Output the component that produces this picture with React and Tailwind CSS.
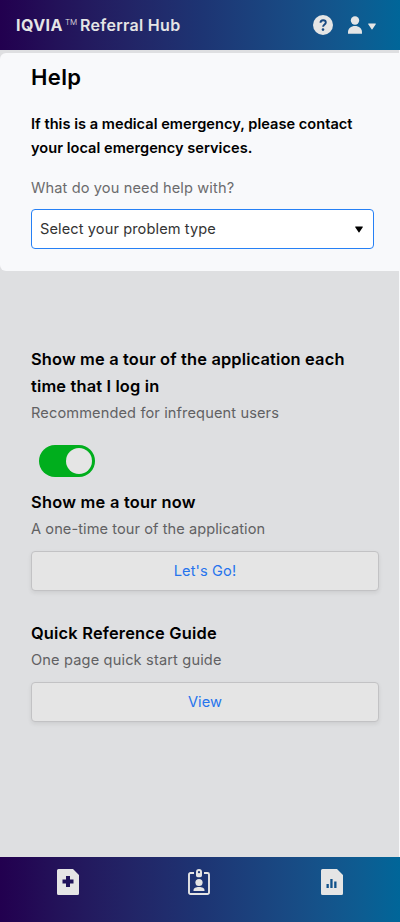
function Caret({ className }) {
  return (
    <svg className={className} viewBox="0 0 10 8" fill="currentColor" aria-hidden="true">
      <path d="M.6.4h8.8c.4 0 .5.4.3.7L5.5 7.4c-.3.4-.7.4-1 0L.3 1.1C.1.8.2.4.6.4Z" />
    </svg>
  );
}

function Header() {
  return (
    <header className="flex h-[50px] items-center bg-linear-to-r from-[#22004f] via-[#1d3473] to-[#006699] pl-4 pr-6 text-[#e5e5e5]">
      <h1 className="flex items-center text-[16px] leading-6">
        <span className="w-[49px] font-bold tracking-[0.45px]">IQVIA</span>
        <span className="mt-[-6px] w-[15px] text-[8px] font-light leading-4">TM</span>
        <span className="whitespace-nowrap font-semibold tracking-[0.3px]">Referral Hub</span>
      </h1>
      <div className="ml-auto flex items-center">
        <svg className="size-5" viewBox="0 0 20 20" aria-label="Help">
          <circle cx="10" cy="10" r="10" fill="#e5e5e5" />
          <path d="M7.5 7.8C7.5 6 8.500 5.200 10.100 5.200s2.700 1 2.700 2.300c0 2-2.700 2-2.700 4.300" fill="none" stroke="#174982" strokeWidth="1.9" />
          <circle cx="10" cy="14.600" r="1.300" fill="#174982" />
        </svg>
        <svg className="ml-[15px] h-[18px] w-[14px]" viewBox="0 0 14 18" fill="currentColor" aria-label="Account">
          <circle cx="7" cy="4.5" r="4.200" />
          <path d="M0 17.700v-1.500C0 12.500 3 10 7 10s7 2.500 7 6.200v1.500Z" />
        </svg>
        <Caret className="ml-[6px] mt-[3px] h-[7px] w-2" />
      </div>
    </header>
  );
}

function ActionButton({ children }) {
  return (
    <button className="block h-10 w-full rounded border border-[#c2c2c4] bg-[#e5e5e5] pt-0.5 text-[14.6px] text-[#2674ed] shadow-[0_2px_4px_rgba(0,0,0,0.08)]">
      {children}
    </button>
  );
}

function Footer() {
  return (
    <footer className="h-[65px] bg-linear-to-r from-[#22004f] via-[#1d3473] to-[#006699] text-[#e5e5e5]">
      <nav className="flex pl-[57px] pt-3">
        <svg className="h-[26px] w-[22px]" viewBox="0 0 22 26" aria-label="New referral">
          <path d="M1.500 0H16l6 6v18.500a1.500 1.500 0 0 1-1.500 1.500h-19A1.500 1.500 0 0 1 0 24.500v-23A1.500 1.500 0 0 1 1.500 0Z" fill="currentColor" />
          <path d="M9 7h4v3.500h3.500v4H13V18H9v-3.500H5.500v-4H9Z" fill="#20135a" />
        </svg>
        <svg className="ml-[109px] h-[26px] w-[22px]" viewBox="0 0 22 26" aria-label="Patients">
          <path d="M6 4H2.500A1.500 1.500 0 0 0 1 5.500v18A1.500 1.500 0 0 0 2.500 25h17a1.500 1.500 0 0 0 1.500-1.500v-18A1.500 1.500 0 0 0 19.500 4H16" fill="none" stroke="currentColor" strokeWidth="1.9" />
          <path d="M8 3a3 3 0 0 1 6 0v3.500A1.800 1.800 0 0 1 12.200 8.300H9.800A1.800 1.800 0 0 1 8 6.500Z" fill="currentColor" />
          <circle cx="11" cy="3.200" r="1.100" fill="#1d3473" />
          <circle cx="11" cy="13.500" r="3.600" fill="currentColor" />
          <path d="M5.500 22v-.8c0-2.200 2.500-3.200 5.500-3.200s5.500 1 5.500 3.200v.8Z" fill="currentColor" />
        </svg>
        <svg className="ml-[111px] h-[26px] w-[22px]" viewBox="0 0 22 26" aria-label="Reports">
          <path d="M1.500 0H16l6 6v18.500a1.500 1.500 0 0 1-1.500 1.500h-19A1.500 1.500 0 0 1 0 24.500v-23A1.500 1.500 0 0 1 1.500 0Z" fill="currentColor" />
          <path d="M5.500 15h2.300v4H5.500ZM9.300 10h2.300v9H9.300ZM13.200 12.500h2.300V19h-2.300Z" fill="#10518a" />
        </svg>
      </nav>
    </footer>
  );
}

export default function App() {
  return (
    <div className="flex h-[922px] w-[400px] flex-col overflow-hidden bg-[#f8f9fb] font-['Inter',sans-serif]">
      <Header />
      <main className="mr-px flex-1 bg-[#dedfe1] pt-[3px]">
        <section className="-mr-px h-[218px] rounded-l-[6px] bg-[#f8f9fb] pl-[31px] pr-[26px] pt-2">
          <h2 className="text-[22px] font-semibold leading-8 tracking-[0.4px] text-black">Help</h2>
          <p className="mt-[19px] whitespace-nowrap text-[14.6px] font-semibold leading-6 tracking-[0.02px] text-black">
            If this is a medical emergency, please contact
            <br />
            your local emergency services.
          </p>
          <p className="mt-4 text-[14.6px] leading-6 tracking-[0.12px] text-[#6b6b6d]">What do you need help with?</p>
          <div className="mt-[9px] flex h-10 items-center rounded border border-[#2680f5] bg-white px-2 text-[14.6px] tracking-[0.1px] text-[#333]">
            <span className="pt-px">Select your problem type</span>
            <Caret className="ml-auto mr-[2px] h-[7px] w-2 text-black" />
          </div>
        </section>

        <div className="pl-[31px] pr-5 pt-[75px] text-[14.6px] tracking-[0.1px]">
          <h3 className="whitespace-nowrap text-[16.4px] font-semibold leading-[27px] tracking-[0.16px] text-black">
            Show me a tour of the application each
            <br />
            time that I log in
          </h3>
          <p className="leading-[26px] tracking-[0.12px] text-[#616163]">Recommended for infrequent users</p>
          <div className="ml-2 mt-[19px] flex h-8 w-14 items-center justify-end rounded-full bg-[#00ae1d] pr-[3px]">
            <span className="size-[26px] rounded-full bg-[#e5e5e5]" />
          </div>
          <h3 className="mt-3 text-[16.4px] font-semibold leading-[27px] tracking-[0.25px] text-black">Show me a tour now</h3>
          <p className="mb-[9px] leading-[26px] tracking-[0.07px] text-[#616163]">A one-time tour of the application</p>
          <ActionButton>Let's Go!</ActionButton>
          <h3 className="mt-[29px] text-[16.4px] font-semibold leading-[27px] tracking-[0.2px] text-black">Quick Reference Guide</h3>
          <p className="mb-[9px] leading-[26px] tracking-[0.15px] text-[#616163]">One page quick start guide</p>
          <ActionButton>View</ActionButton>
        </div>
      </main>
      <Footer />
    </div>
  );
}
